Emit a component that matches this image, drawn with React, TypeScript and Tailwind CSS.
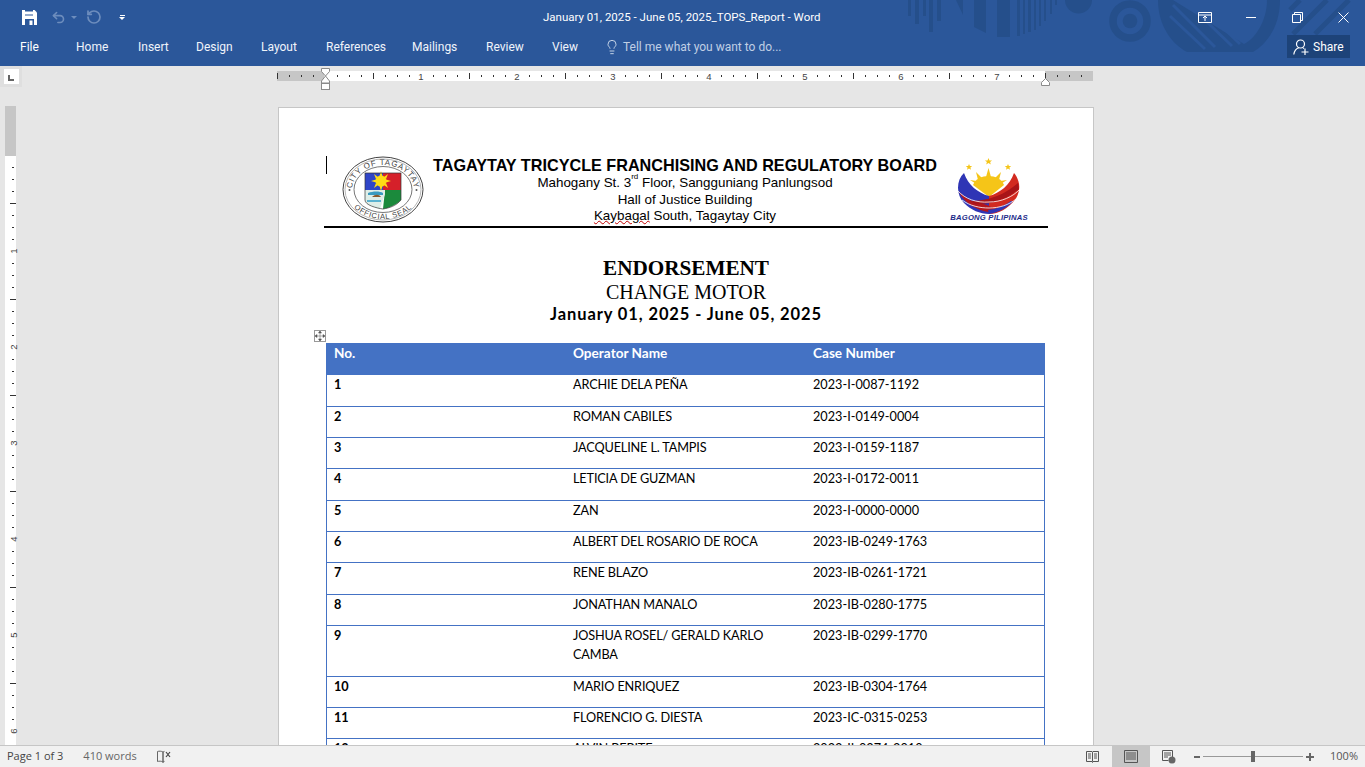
import React from "react";
import { RotateCw, Undo2, Lightbulb } from "lucide-react";

const tabs = [
  ["Home", "w-[62px]"],
  ["Insert", "w-[58px]"],
  ["Design", "w-[65px]"],
  ["Layout", "w-[65px]"],
  ["References", "w-[86px]"],
  ["Mailings", "w-[74px]"],
  ["Review", "w-[66px]"],
  ["View", "w-[54px]"],
];

const rows = [
  ["1", "ARCHIE DELA PEÑA", "2023-I-0087-1192", "h-[32px]"],
  ["2", "ROMAN CABILES", "2023-I-0149-0004", "h-[31px]"],
  ["3", "JACQUELINE L. TAMPIS", "2023-I-0159-1187", "h-[31px]"],
  ["4", "LETICIA DE GUZMAN", "2023-I-0172-0011", "h-[32px]"],
  ["5", "ZAN", "2023-I-0000-0000", "h-[31px]"],
  ["6", "ALBERT DEL ROSARIO DE ROCA", "2023-IB-0249-1763", "h-[31px]"],
  ["7", "RENE BLAZO", "2023-IB-0261-1721", "h-[32px]"],
  ["8", "JONATHAN MANALO", "2023-IB-0280-1775", "h-[31px]"],
  ["9", "JOSHUA ROSEL/ GERALD KARLO CAMBA", "2023-IB-0299-1770", "h-[51px]"],
  ["10", "MARIO ENRIQUEZ", "2023-IB-0304-1764", "h-[31px]"],
  ["11", "FLORENCIO G. DIESTA", "2023-IC-0315-0253", "h-[31px]"],
  ["12", "ALVIN BEBITE", "2023-II-0374-2010", "h-[31px]"],
];

function TitleArt() {
  const c = "#254f8b";
  const b = "#2b579a";
  return (
    <svg className="absolute left-0 top-0" width="1365" height="66" viewBox="0 0 1365 66" aria-hidden="true">
      <g fill={c}>
        <rect x="908" y="0" width="3" height="16" />
        <rect x="915" y="0" width="4" height="24" />
        <rect x="923" y="0" width="3" height="16" />
        <rect x="929" y="0" width="4" height="32" />
        <rect x="937" y="0" width="4" height="21" />
        <path d="M956 0h7v15z" />
        <path d="M974 0h12v33l-12-6z" />
        <rect x="997" y="0" width="13" height="37" />
        <rect x="1017" y="0" width="3" height="36" />
        <rect x="1023" y="0" width="2" height="34" />
        <rect x="1028" y="0" width="3" height="32" />
        <rect x="1034" y="0" width="2" height="30" />
        <rect x="1039" y="0" width="2" height="26" />
        <rect x="1044" y="0" width="2" height="21" />
        <rect x="1050" y="0" width="2" height="14" />
        <rect x="1055" y="0" width="2" height="5" />
        <path d="M1065 0h27a13.500 13.500 0 0 1-27 0z" />
        <circle cx="1130" cy="21" r="7.300" />
      </g>
      <circle cx="1130" cy="21" r="17" fill="none" stroke={c} strokeWidth="7.500" />
      <path d="M1158 0h122c0 26-13 44-27 52h-66c-15-8-29-26-29-52z" fill={c} />
      <path d="M1173 0l71 44c12-6 23-24 23-44z" fill={b} />
      <g stroke={b} strokeWidth="3" fill="none">
        <path d="M1173 5l42 42" />
        <path d="M1170 16l35 33" />
        <path d="M1184 0l48 46" />
        <path d="M1194 0l46 44" />
      </g>
      <g stroke={c} strokeWidth="5" fill="none">
        <path d="M1300 0l-10 10" />
        <path d="M1327 0l-34 34" />
        <path d="M1349 0l-34 34" />
      </g>
    </svg>
  );
}

function Ruler() {
  const ticks: React.ReactNode[] = [];
  for (let i = -3; i <= 63; i++) {
    const x = 48 + i * 12;
    if (i % 8 === 0) {
      if (i === 0) continue;
      ticks.push(
        <text key={i} x={x} y="8.500" textAnchor="middle" fontSize="9.500" fill="#444" fontFamily="Liberation Sans">
          {i / 8}
        </text>
      );
    } else if (i % 4 === 0) {
      ticks.push(<rect key={i} x={x} y="2" width="1" height="6" fill="#333" />);
    } else {
      ticks.push(<rect key={i} x={x} y="4" width="1" height="2" fill="#333" />);
    }
  }
  return (
    <svg className="absolute left-[277px] top-[2px]" width="817" height="26" viewBox="0 0 817 26" aria-hidden="true">
      <rect x="0" y="3" width="816" height="10" fill="#fff" />
      <rect x="0" y="3" width="47" height="10" fill="#c6c6c6" />
      <rect x="768" y="3" width="48" height="10" fill="#c6c6c6" />
      <g transform="translate(0 3)">
        <rect x="0" y="2" width="1" height="6" fill="#333" />
        {ticks}
      </g>
      <path d="M44.500.5h8v3l-4 4.500-4-4.500zM48.500 8l4 5v2h-8v-2z" fill="#fff" stroke="#8a8a8a" />
      <rect x="44.500" y="15.500" width="8" height="6" fill="#fff" stroke="#8a8a8a" />
      <path d="M764.500 17.500v-3l4-4 4 4v3z" fill="#fff" stroke="#8a8a8a" />
    </svg>
  );
}

function VRuler() {
  const ticks: React.ReactNode[] = [];
  for (let i = 1; i < 49; i++) {
    const y = 49 + i * 12;
    if (i % 8 === 0) {
      ticks.push(
        <text
          key={i}
          x="0"
          y="0"
          transform={`translate(8 ${y}) rotate(-90)`}
          textAnchor="middle"
          dominantBaseline="central"
          fontSize="9.500"
          fill="#444"
          fontFamily="Liberation Sans"
        >
          {i / 8}
        </text>
      );
    } else if (i % 4 === 0) {
      ticks.push(<rect key={i} x="5" y={y} width="6" height="1" fill="#333" />);
    } else {
      ticks.push(<rect key={i} x="7" y={y} width="2" height="1" fill="#333" />);
    }
  }
  return (
    <svg className="absolute left-[5px] top-[40px] overflow-visible" width="11" height="640" viewBox="0 0 11 640" aria-hidden="true">
      <rect x="0" y="0" width="11" height="640" fill="#fff" />
      <rect x="0" y="0" width="11" height="50" fill="#c6c6c6" />
      {ticks}
    </svg>
  );
}

function Seal() {
  const id = "sealcurve";
  return (
    <svg className="ml-[18px] mt-[1px] shrink-0" width="82" height="68" viewBox="0 0 82 68" aria-hidden="true">
      <ellipse cx="41" cy="33.500" rx="40" ry="32.500" fill="#fff" stroke="#444" strokeWidth="1" />
      <ellipse cx="41" cy="33.500" rx="38" ry="30.500" fill="none" stroke="#888" strokeWidth="0.600" />
      <ellipse cx="41" cy="33.500" rx="29" ry="23" fill="none" stroke="#555" strokeWidth="0.800" />
      <defs>
        <path id={`${id}1`} d="M10 34a31 25 0 0 1 62 0" />
        <path id={`${id}2`} d="M4.500 34a36.500 29 0 0 0 73 0" />
      </defs>
      <text fontSize="8" fill="#444" fontFamily="Liberation Sans" letterSpacing="0.700">
        <textPath href={`#${id}1`} startOffset="50%" textAnchor="middle">CITY OF TAGAYTAY</textPath>
      </text>
      <text fontSize="7.500" fill="#444" fontFamily="Liberation Sans" letterSpacing="0.700">
        <textPath href={`#${id}2`} startOffset="50%" textAnchor="middle">OFFICIAL SEAL</textPath>
      </text>
      <circle cx="7.500" cy="34" r="1" fill="#555" />
      <circle cx="74.500" cy="34" r="1" fill="#555" />
      <path d="M23 17h18v17H23z" fill="#2f45c8" />
      <path d="M41 17h18v17H41z" fill="#d5202a" />
      <path d="M43 34h16v10c-5 5-12 8-18 9z" fill="#1b8a3c" />
      <path d="M23 34h20v4l-5 15c-7-2-15-5-15-9z" fill="#dfeee8" />
      <path d="M26 37c5-2 12-2 15 0v2H26z" fill="#3a9bc0" />
      <path d="M30 41c3-3 7-3 9 0z" fill="#8a5a2b" />
      <path d="M25 44h14v2H25z" fill="#5bb2d0" />
      <g fill="#ffdc14">
        <circle cx="39" cy="25" r="5.500" />
        <path d="M39 15l1.500 5h-3zM39 35l1.500-5h-3zM29 25l5-1.500v3zM49 25l-5-1.500v3zM32 18l4 3-2 2zM46 18l-4 3 2 2zM32 32l4-3-2-2zM46 32l-4-3 2-2z" />
      </g>
      <path d="M23 17h36v27c-5 6-12 8-18 9-7-1-18-4-18-9z" fill="none" stroke="#333" strokeWidth="0.700" />
    </svg>
  );
}

function Bagong() {
  return (
    <svg className="shrink-0" width="82" height="68" viewBox="0 0 82 68" aria-hidden="true">
      <g fill="#f5c518">
        <path d="M40.500 3l1 2.400h2.600l-2 1.600.7 2.500-2.300-1.400-2.300 1.400.7-2.500-2-1.600h2.600z" />
        <path d="M21 9l.9 2.100h2.300l-1.800 1.400.6 2.200-2-1.200-2 1.200.6-2.200-1.800-1.400h2.300z" />
        <path d="M60 9l.9 2.100h2.300l-1.800 1.400.6 2.200-2-1.200-2 1.200.6-2.200-1.800-1.400h2.300z" />
        <path d="M40.500 13l2.500 9h-5zM28 17l6 6-4 2zM53 17l-6 6 4 2zM22 25l7 1 1 4z" />
        <path d="M59 25l-7 1-1 4z" />
        <path d="M25 30c2-6 9-9 15.500-9S54 24 56 30L41 42z" />
      </g>
      <path d="M16 18C8 25 8 40 16 48c7 7 16 11 25 11V41C30 38 20 30 16 18z" fill="#2f35b5" />
      <path d="M66 18c7 8 7 20 0 28-6 7-15 13-25 13V41c11-3 21-11 25-23z" fill="#d22a20" />
      <path d="M10.500 36c4 5 12 10 20 12 8 1 11 3 16 6l-6 3c-10-1-25-9-30-21z" fill="#b3161c" />
      <path d="M22 46c7 0 17-1 27-5 8-3 15-8 21-13l1 6c-7 6-16 11-25 13-8 2-15 2-19 2z" fill="#a81418" />
      <path d="M40 55c8-1 16-4 23-9l2 .5c-6 6-14 11-24 12.500z" fill="#2f35b5" />
      <path d="M10 36c7 8 19 12 31 11 12 0 24-5 31-13M14 45c8 6 18 8 27 8 10 0 20-3 27-9" fill="none" stroke="#fff" strokeWidth="0.800" />
      <text x="41" y="64.500" textAnchor="middle" fontSize="7.700" fontWeight="700" fontStyle="italic" fill="#1d2c8a" fontFamily="Liberation Sans" letterSpacing="0.200">
        BAGONG PILIPINAS
      </text>
    </svg>
  );
}

export default function App() {
  return (
    <div className="relative flex h-[767px] w-[1365px] flex-col overflow-hidden bg-[#e6e6e6] font-['Liberation_Sans',sans-serif]">
      <header className="relative h-[66px] shrink-0 overflow-hidden bg-[#2b579a] font-['Roboto',sans-serif] text-white">
        <TitleArt />
        <div className="relative flex h-[34px] items-center">
          <div className="flex w-[1365px] items-center">
            <svg className="ml-[22px]" width="15" height="15" viewBox="0 0 15 15" aria-hidden="true">
              <path d="M0 0h12.500L15 2.500V15H0z" fill="#fff" />
              <path d="M3 0h8v5.500H3zM3 9h9v6H3z" fill="#2b579a" />
              <path d="M3 1.500h8v3H3zM7.500 10.500h3V15h-3z" fill="#fff" />
            </svg>
            <Undo2 className="ml-[14px] h-[15px] w-[15px] text-[#6d8dbd]" strokeWidth={2.600} />
            <span className="ml-[5px] h-0 w-0 border-x-[3px] border-t-[3px] border-x-transparent border-t-[#6d8dbd]" />
            <RotateCw className="ml-[9px] h-[16px] w-[16px] -scale-x-100 text-[#6d8dbd]" strokeWidth={2.600} />
            <span className="ml-[17px] flex flex-col items-center gap-[1px]">
              <span className="h-[1px] w-[5px] bg-white" />
              <span className="h-0 w-0 border-x-[3px] border-t-[3px] border-x-transparent border-t-white" />
            </span>
            <span className="ml-[418px] mt-[1px] whitespace-nowrap text-[11.500px] text-white">January 01, 2025 - June 05, 2025_TOPS_Report - Word</span>
            <div className="ml-auto flex items-center">
              <svg width="14" height="11" viewBox="0 0 14 11" className="mr-[34px]" aria-hidden="true">
                <path d="M.5.5h13v10H.5zM.5 3h13M7 9V4.500M5 6l2-2 2 2" fill="none" stroke="#fff" />
              </svg>
              <span className="mr-[36px] h-[1px] w-[10px] bg-white" />
              <svg width="11" height="11" viewBox="0 0 11 11" className="mr-[35px]" aria-hidden="true">
                <path d="M.5 2.500h8v8h-8zM2.500 2.500v-2h8v8h-2" fill="none" stroke="#fff" />
              </svg>
              <svg width="11" height="11" viewBox="0 0 11 11" className="mr-[16px]" aria-hidden="true">
                <path d="M.5.5l10 10M10.500.5l-10 10" fill="none" stroke="#fff" />
              </svg>
            </div>
          </div>
        </div>
        <nav className="relative flex h-[26px] items-center text-[12px]">
          <span className="ml-[20px] w-[45px]">File</span>
          {tabs.map(([t, w]) => (
            <span key={t} className={`${w} pl-[11px] text-[#f0f4fa]`}>
              {t}
            </span>
          ))}
          <Lightbulb className="ml-[9px] h-[16px] w-[16px] text-[#dbe5f2]" strokeWidth={1.300} />
          <span className="ml-[3px] text-[12px] text-[#c0cfe5]">Tell me what you want to do...</span>
          <span className="absolute right-[15px] top-[1px] flex h-[23px] w-[63px] items-center bg-[#1d4379] pl-[6px] text-[12px]">
            <svg className="mr-[4px]" width="16" height="16" viewBox="0 0 16 16" aria-hidden="true">
              <circle cx="7.500" cy="5" r="4" fill="none" stroke="#fff" strokeWidth="1.200" />
              <path d="M.8 15.500c.5-3.500 2.700-6 5-6.700M10 9l1 .5M8.500 13h7M12 9.500v6.500" fill="none" stroke="#fff" strokeWidth="1.200" />
            </svg>
            Share
          </span>
        </nav>
      </header>

      <main className="relative min-h-0 flex-1 overflow-hidden">
        <span className="absolute left-0 top-0 flex h-[21px] w-[22px] items-center justify-center bg-[#dfdfdf]">
          <span className="flex h-[15px] w-[15px] items-end justify-center bg-white pb-[3px]">
            <span className="h-[6px] w-[6px] border-b-2 border-l-2 border-[#666]" />
          </span>
        </span>
        <Ruler />
        <VRuler />
        <div className="ml-[278px] mt-[41px] h-[700px] w-[816px] border border-[#c6c6c6] bg-white pl-[45px] pt-[47px]">
          <div className="relative w-[724px] border-b-2 border-black">
            <div className="flex h-[71px]">
              <span className="absolute left-[2px] top-[1px] h-[18px] w-[1px] bg-black" />
              <Seal />
              <div className="w-[524px] shrink-0 pr-[2px] text-center text-[13.400px] leading-[16.500px] text-black">
                <p className="mt-[1px] whitespace-nowrap text-[16.200px] font-bold leading-[19px]">TAGAYTAY TRICYCLE FRANCHISING AND REGULATORY BOARD</p>
                <p>
                  Mahogany St. 3<sup className="align-[4px] text-[8px] leading-[0]">rd</sup> Floor, Sangguniang Panlungsod
                </p>
                <p>Hall of Justice Building</p>
                <p>
                  <span className="underline decoration-[#c00000] decoration-wavy decoration-1 underline-offset-[0px]">Kaybagal</span> South, Tagaytay City
                </p>
              </div>
              <Bagong />
            </div>
          </div>
          <div className="ml-[2px] w-[720px] pt-[28px] text-center text-black">
            <p className="font-['Liberation_Serif',serif] text-[21.200px] font-bold leading-[25px]">ENDORSEMENT</p>
            <p className="font-['Liberation_Serif',serif] text-[20px] leading-[23px]">CHANGE MOTOR</p>
            <p className="font-['Lato',sans-serif] text-[16.500px] font-bold leading-[20px] tracking-[0.9px]">January 01, 2025 - June 05, 2025</p>
          </div>
          <div className="relative ml-[2px] mt-[19px] w-[719px] border-x border-[#4472c4] font-['Lato',sans-serif] text-[12.700px] text-black">
            <span className="absolute -left-[13px] -top-[13px] flex h-[12px] w-[12px] items-center justify-center border border-[#999] bg-white">
              <svg width="10" height="10" viewBox="0 0 10 10" aria-hidden="true">
                <path d="M5 0v10M0 5h10M5 0L3.500 2h3zM5 10L3.500 8h3zM0 5l2-1.500v3zM10 5L8 3.500v3z" fill="#555" stroke="#555" strokeWidth="0.500" />
              </svg>
            </span>
            <div className="grid h-[32px] grid-cols-[239px_240px_1fr] bg-[#4472c4] pt-[1px] text-[13.600px] font-bold leading-[18px] text-white">
              <span className="pl-[7px]">No.</span>
              <span className="pl-[7px]">Operator Name</span>
              <span className="pl-[7px]">Case Number</span>
            </div>
            {rows.map(([n, name, c, h]) => (
              <div key={n} className={`grid ${h} grid-cols-[239px_240px_1fr] border-b border-[#4472c4] leading-[19px]`}>
                <span className="pl-[7px] font-bold">{n}</span>
                <span className="w-[205px] pl-[7px] tracking-[-0.15px]">{name}</span>
                <span className="pl-[7px]">{c}</span>
              </div>
            ))}
          </div>
        </div>
      </main>

      <footer className="relative z-10 flex h-[22px] shrink-0 items-center border-t border-[#c6c6c6] bg-[#f1f1f1] font-['Open_Sans',sans-serif] text-[11px] text-[#444]">
        <span className="ml-[7px]">Page 1 of 3</span>
        <span className="ml-[20px] text-[#666]">410 words</span>
        <svg className="ml-[19px]" width="15" height="15" viewBox="0 0 15 15" aria-hidden="true">
          <path d="M7 3C5.500 2 3 2 1.500 2.500v10C3 12 5.500 12 7 13zM7 3c.5-.3 1-.5 1.500-.6M7 13c.5-.3 1-.5 1.500-.6" fill="none" stroke="#666" />
          <path d="M10 3l4 5M14 3l-4 5" stroke="#444" strokeWidth="1.200" />
          <path d="M7 3v11" stroke="#666" />
        </svg>
        <div className="ml-auto flex h-full items-center">
          <svg width="13" height="13" viewBox="0 0 13 13" className="mr-[13px]" aria-hidden="true">
            <path d="M.5 1.500h5.500l.5 1 .5-1h5.500v10H7l-.5 1-.5-1H.5zM6.500 2.500v9M2 4h3M2 6h3M2 8h3M8 4h3M8 6h3M8 8h3" fill="none" stroke="#555" />
          </svg>
          <span className="flex h-full w-[38px] items-center justify-center bg-[#c6c6c6]">
            <svg width="14" height="13" viewBox="0 0 14 13" aria-hidden="true">
              <path d="M.5.5h13v12H.5zM2 3h10M2 5h10M2 7h10M2 9h10" fill="none" stroke="#555" />
            </svg>
          </span>
          <svg width="14" height="14" viewBox="0 0 14 14" className="ml-[12px]" aria-hidden="true">
            <path d="M.5.500h10v7M.5.500v10h6M2 3h7M2 5h7M2 7h4" fill="none" stroke="#555" />
            <circle cx="10" cy="10" r="3.500" fill="#666" />
          </svg>
          <span className="ml-[18px] h-[2px] w-[6px] bg-[#666]" />
          <span className="relative ml-[3px] h-[1px] w-[100px] bg-[#999]">
            <span className="absolute left-[48px] top-[-5px] h-[11px] w-[4px] bg-[#666]" />
          </span>
          <span className="relative ml-[3px] h-[8px] w-[8px]">
            <span className="absolute left-0 top-[3px] h-[2px] w-[8px] bg-[#666]" />
            <span className="absolute left-[3px] top-0 h-[8px] w-[2px] bg-[#666]" />
          </span>
          <span className="ml-[16px] mr-[7px] text-[11px] text-[#555]">100%</span>
        </div>
      </footer>
    </div>
  );
}
